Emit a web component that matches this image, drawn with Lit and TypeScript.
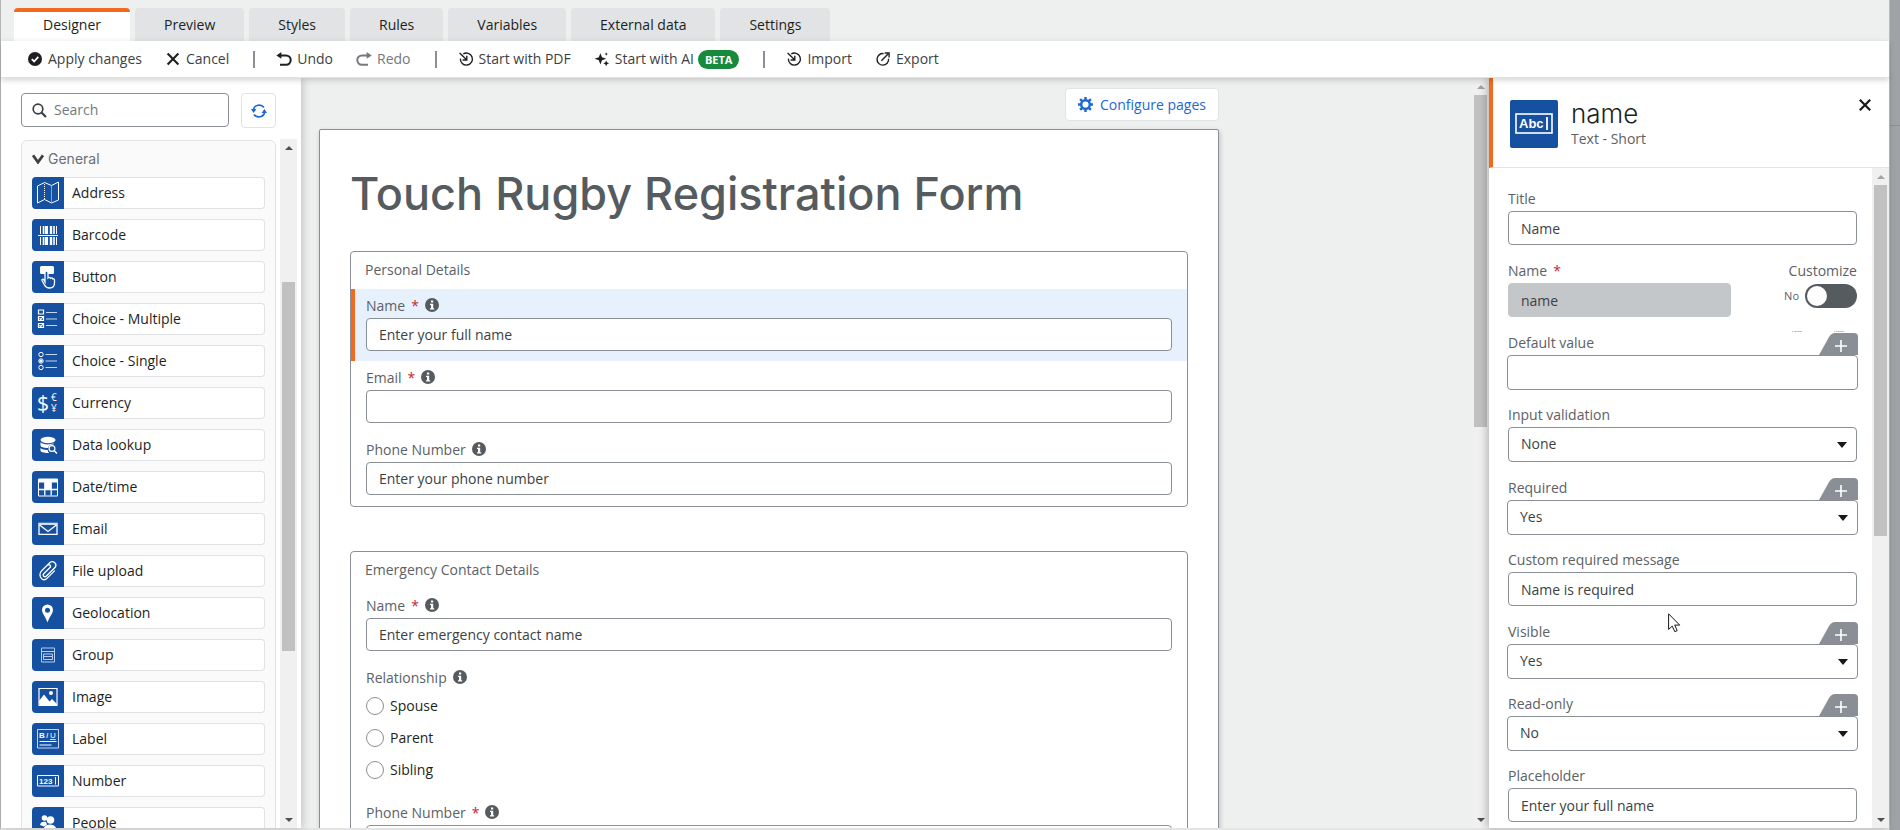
import { LitElement, html, css, svg, nothing } from "lit";
import { customElement, property } from "lit/decorators.js";
import { classMap } from "lit/directives/class-map.js";

const UI_FONT = css`"Open Sans", "Noto Sans", sans-serif`;

const tabs = ["Designer", "Preview", "Styles", "Rules", "Variables", "External data", "Settings"];

const importGlyph = svg`<path d="M4.200 2A6 6 0 1 1 1.400 6.600" fill="none" stroke="currentColor" stroke-width="1.400"/><path d="M.6 1l6.800 6.600M7.800 3.800v4.200H3.600" fill="none" stroke="currentColor" stroke-width="1.400"/>`;

const toolGlyphs: Record<string, unknown> = {
  apply: svg`<circle cx="7" cy="7" r="7" fill="currentColor"/><path d="M3.800 7.200l2.300 2.300 4.200-4.700" fill="none" stroke="#fff" stroke-width="1.800"/>`,
  cancel: svg`<path d="M1.600 1.600l10.800 10.800M12.400 1.600L1.600 12.400" stroke="currentColor" stroke-width="2.100"/>`,
  undo: svg`<path d="M1.500 3.400H9a4.600 4.600 0 0 1 0 9.400H3" fill="none" stroke="currentColor" stroke-width="2"/><path d="M-.6 3.400L4.400 0v6.800z" fill="currentColor"/>`,
  redo: svg`<path d="M12.500 3.400H5a4.600 4.600 0 0 0 0 9.400h6" fill="none" stroke="currentColor" stroke-width="2"/><path d="M14.800 3.400L9.600 0v6.800z" fill="currentColor"/>`,
  import: importGlyph,
  ai: svg`<path d="M5.400 1.200L7 5.300l4.200 1.500L7 8.300l-1.600 4.200-1.600-4.200L-.4 6.800l4.200-1.500zM11.200 8.400l.9 2 2 .9-2 .9-.9 2-.9-2-2-.9 2-.9zM11.200.2l.5 1.300 1.300.5-1.300.5-.5 1.300-.5-1.300L9.400 2l1.300-.5z" fill="currentColor"/>`,
  export: svg`<path d="M7.600 1.600A5.800 5.800 0 1 0 12.600 6.800M5.400 8.800L12 2M8.600 1h4.500v4.600" fill="none" stroke="currentColor" stroke-width="1.400"/>`,
};

const widgetGlyphs: Record<string, unknown> = {
  Address: svg`<path d="M5.500 9l7-3.500 7 3 7-3.500v18l-7 3-7-3.500-7 3.500z" fill="none" stroke="#fff"/><path d="M12.500 7v15M19.500 9.500v15" stroke="#fff" stroke-dasharray="1 1"/>`,
  Barcode: svg`<path d="M8.500 7v8M8.500 18v8M24.500 7v8M24.500 18v8M15.500 7v8M15.500 18v8" stroke="#fff"/><path d="M11.500 7v8M11.500 18v8M22 7v8M22 18v8" stroke="#fff" stroke-width="1.600"/><path d="M14 7v8M14 18v8M19 7v8M19 18v8" stroke="#fff" stroke-width="2.400"/><path d="M6 16.500h20" stroke="#fff"/>`,
  Button: svg`<rect x="8" y="5" width="14" height="8" rx="1.500" fill="#fff"/><path d="M13 21V11.500a1.500 1.500 0 0 1 3 0V17c1-1 2-.8 2.500.3.900-.7 2-.4 2.300.7 1-.4 1.700.1 1.700 1.200V22c0 3-2 5-5 5-3 0-4-1-5-3l-2.500-4.500c-.4-1 .8-1.700 1.600-1z" fill="#1650a1" stroke="#fff" stroke-width="1.300"/>`,
  "Choice - Multiple": svg`<path d="M6.500 7h5v4h-5zM6.500 13.500h5v4h-5zM6.500 20.500h5v4h-5z" fill="none" stroke="#fff" stroke-width="1.200"/><path d="M7.500 15.300l1.300 1.200 2-2.500M7.500 22.300l1.300 1.200 2-2.500" fill="none" stroke="#fff" stroke-width="1.200"/><path d="M14 9.500h11M14 16h11M14 22.500h11" stroke="#c6d6ec"/>`,
  "Choice - Single": svg`<g fill="none" stroke="#fff"><circle cx="9" cy="9.500" r="2.200"/><circle cx="9" cy="16" r="2.200"/><circle cx="9" cy="22.500" r="2.200"/></g><circle cx="9" cy="16" r="1.600" fill="#fff"/><path d="M13.500 9.500H25M13.500 16H25M13.500 22.500H25" stroke="#c6d6ec"/>`,
  Currency: svg`<g fill="#fff" font-family="Open Sans, sans-serif"><text x="5" y="24" font-size="21">$</text><text x="19" y="14" font-size="10">€</text><text x="19" y="25" font-size="10">¥</text></g>`,
  "Data lookup": svg`<ellipse cx="16" cy="11" rx="7.500" ry="3.200" fill="#fff"/><path d="M8.500 13.300c2.500 2.500 9 2.800 13 1v1.200a5 5 0 0 0-5.500 3.500c-4 .2-7-.8-7.500-2.200zM8.500 19c1.500 1.500 4.500 2 7.200 1.900a5 5 0 0 0 1.500 3c-4 .4-8.700-.8-8.700-2.400z" fill="#fff"/><circle cx="20" cy="19.500" r="2.900" fill="none" stroke="#fff" stroke-width="1.200"/><path d="M22 21.500l3 3" stroke="#fff" stroke-width="1.500"/>`,
  "Date/time": svg`<path d="M6.500 8h19v17h-19z" fill="none" stroke="#fff"/><path d="M6.500 8h19v3.500h-19z" fill="#fff"/><path d="M12.800 11v13.500M19.200 11v13.500M6.500 18.500h19" stroke="#fff" stroke-width="1.300"/><path d="M13 11h6v3h-6zM13 14h6v4h-6z" fill="#fff"/>`,
  Email: svg`<path d="M7 10.500h18v10.800H7z" fill="none" stroke="#fff" stroke-width="1.300"/><path d="M7 11.500l9 7 9-7" fill="none" stroke="#fff" stroke-width="1.300"/><path d="M7 10h18v2H7z" fill="#d3def0"/>`,
  "File upload": svg`<path d="M18.500 12l-6.800 6.800a1.700 1.700 0 0 0 2.500 2.500l9-9a3.600 3.600 0 0 0-5-5L9.700 15.700a5.400 5.400 0 0 0 0 8 4 4 0 0 0 5.300-.3l7.500-7.500M18.500 12a1.700 1.700 0 0 0-2.500-2" fill="none" stroke="#fff" stroke-width="1.300" stroke-linecap="round"/>`,
  Geolocation: svg`<path d="M15.500 7.500a5.500 5.500 0 0 0-5.500 5.500c0 3.500 3.500 6.500 5.500 12.500 2-6 5.500-9 5.500-12.500a5.500 5.500 0 0 0-5.500-5.500zm0 3.300a2.500 2.500 0 1 1 0 5 2.500 2.500 0 0 1 0-5z" fill="#fff" fill-rule="evenodd"/>`,
  Group: svg`<path d="M9.500 9h13v14h-13zM9.500 12.500h13M11.500 15h9M11.500 17.500h9v-2.500M11.500 20.500h9v-3M11.500 15v5.500" fill="none" stroke="#b9cde9"/>`,
  Image: svg`<path d="M7 7.500h18v17H7z" fill="none" stroke="#fff" stroke-width="1.200"/><circle cx="19" cy="12" r="2" fill="#fff"/><path d="M7.500 24l-.5-4 5-6.500 5.500 7 2.500-2.500 5 5v1.500z" fill="#fff"/>`,
  Label: svg`<path d="M5.500 6.500h21v18.500h-21z" fill="none" stroke="#c6d6ec"/><g fill="#fff" font-family="Liberation Sans, sans-serif" font-size="8"><text x="7" y="15" font-weight="700">B</text><text x="14" y="15" font-style="italic">I</text><text x="18" y="15" text-decoration="underline">U</text></g><path d="M7.500 18.500h17M7.500 22h12" stroke="#fff" stroke-width="1.200"/>`,
  Number: svg`<path d="M5.500 10.500h21v10.500h-21z" fill="none" stroke="#fff"/><text x="7" y="19" fill="#fff" font-family="Liberation Sans, sans-serif" font-size="8" font-weight="700">123</text><path d="M23.500 12v7.500" stroke="#fff"/>`,
  People: svg`<circle cx="12.500" cy="11" r="2.800" fill="#fff"/><circle cx="18.500" cy="13" r="3.800" fill="#fff"/><path d="M8 18c.5-3 3-4 6-3l1 2.500-3 2zM11 25c0-5 3-7.500 7-7.500s7 2.500 7 7.500v3H11z" fill="#fff"/>`,
};

@customElement("scroll-track")
class ScrollTrack extends LitElement {
  @property({ type: Number }) start = 0;
  @property({ type: Number }) size = 50;
  @property({ type: Boolean }) top = false;

  static styles = css`
    :host { display: flex; flex: none; width: 17px; flex-direction: column; align-items: center; background: #f0f0f0; }
    .arrow { flex: none; height: 17px; display: flex; align-items: center; }
    .arrow svg { display: block; }
    .rail { flex: 1; width: 13px; position: relative; }
    .thumb { position: absolute; left: 0; right: 0; background: #c1c1c1; }
  `;

  render() {
    return html`
      <div class="arrow"><svg width="8" height="4"><path d="M0 4L4 0l4 4z" fill=${this.top ? "#a3a3a3" : "#505050"} /></svg></div>
      <div class="rail"><div class="thumb" style="top:${this.start}%;height:${this.size}%"></div></div>
      <div class="arrow"><svg width="8" height="4"><path d="M0 0h8L4 4z" fill="#505050" /></svg></div>
    `;
  }
}

interface PropField {
  id: string;
  label: string;
  value: string;
  kind: "text" | "select";
  expr?: boolean;
}

const propFields: PropField[] = [
  { id: "default", label: "Default value", value: "", kind: "text", expr: true },
  { id: "validation", label: "Input validation", value: "None", kind: "select" },
  { id: "required", label: "Required", value: "Yes", kind: "select", expr: true },
  { id: "message", label: "Custom required message", value: "Name is required", kind: "text" },
  { id: "visible", label: "Visible", value: "Yes", kind: "select", expr: true },
  { id: "readonly", label: "Read-only", value: "No", kind: "select", expr: true },
  { id: "placeholder", label: "Placeholder", value: "Enter your full name", kind: "text" },
];

@customElement("app-root")
class AppRoot extends LitElement {
  static styles = css`
    :host { display: block; height: 100vh; overflow: hidden; font: 14px/20px ${UI_FONT}; color: #1d1f22; }
    * { box-sizing: border-box; }
    button, input, select { font: inherit; color: inherit; margin: 0; }
    button { cursor: pointer; }
    svg { display: block; flex: none; }
    h1, h2, h3, p { margin: 0; font-weight: 400; }

    .shell { display: flex; height: 100%; background: #9fa3a7; }
    .window { flex: 1; min-width: 0; display: flex; flex-direction: column; border-left: 1px solid #b4b4b4; border-bottom: 2px solid #e4e4e4; background: #eef0f0; }
    .behind { flex: none; width: 11px; border-left: 1px solid #b9bcbe; }
    .behind-top { height: 126px; border-bottom: 1px solid #8d9195; }

    .tabs { flex: none; display: flex; gap: 5px; height: 41px; padding: 8px 13px 0; }
    .tab { border: 0; border-radius: 4px 4px 0 0; background: #e1e3e4; padding: 0 29px; }
    .tab.active { background: #fff; border-top: 4px solid #f26a1b; padding-bottom: 4px; }

    .toolbar { flex: none; display: flex; align-items: center; gap: 24px; height: 37px; padding: 0 27px; background: #fff; border-bottom: 1px solid #e0e2e3; box-shadow: 0 2px 6px rgba(0, 0, 0, 0.18); position: relative; z-index: 2; }
    .tool { display: flex; align-items: center; gap: 6px; border: 0; background: none; padding: 0; color: #3c3f43; white-space: nowrap; }
    .tool svg { color: #1d1f22; overflow: visible; }
    .tool.muted, .tool.muted svg { color: #74797e; }
    .tool-text { display: flex; align-items: center; gap: 4px; }
    .beta { background: #178a3c; color: #fff; font-size: 11px; line-height: 19px; font-weight: 700; border-radius: 10px; padding: 0 7px; }
    .sep { width: 2px; height: 17px; margin: 0 -1px 0 0; background: #8a8f96; }
    .sep + .tool { margin-left: -1px; }

    .body { flex: 1; min-height: 0; display: flex; }

    .palette { flex: none; width: 300px; display: flex; flex-direction: column; background: #fff; box-shadow: 2px 0 8px rgba(0, 0, 0, 0.18); z-index: 1; }
    .search-row { flex: none; display: flex; gap: 12px; padding: 15px 25px 11px 20px; }
    .search { flex: 1; min-width: 0; display: flex; align-items: center; gap: 7px; height: 34px; border: 1px solid #8a8f96; border-radius: 4px; padding: 0 10px; }
    .search input { flex: 1; min-width: 0; border: 0; outline: 0; padding: 0; background: none; }
    .search input::placeholder { color: #74797e; opacity: 1; }
    .refresh { width: 35px; height: 35px; border: 1px solid #e1e2e5; border-radius: 4px; background: #fff; display: flex; align-items: center; justify-content: center; padding: 0; }
    .palette-scroll { flex: 1; min-height: 0; display: flex; gap: 4px; padding: 0 4px 0 20px; }
    .palette-clip { flex: 1; min-width: 0; overflow: hidden; padding-top: 1px; }
    .group { border: 1px solid #e1e2e5; border-radius: 6px; background: #fafafa; padding: 8px 10px; }
    .group-title { display: flex; align-items: center; gap: 4px; font: 14px/20px Inter, "Open Sans", sans-serif; color: #6a6f74; padding-bottom: 8px; }
    .widgets { display: grid; gap: 10px; }
    .widget { display: flex; align-items: center; gap: 8px; height: 32px; border: 1px solid #e1e2e5; border-left: 0; border-radius: 4px; background: #fff; padding: 0; text-align: left; }
    .widget svg { border-radius: 4px 0 0 4px; background: #1650a1; }

    .canvas { flex: 1; min-width: 0; display: flex; overflow: hidden; }
    .canvas-inner { flex: 1; min-width: 0; padding: 10px 18px 0; }
    .page-wrap { width: 900px; max-width: 100%; }
    .configure-row { display: flex; justify-content: flex-end; padding-bottom: 8px; }
    .configure { display: flex; align-items: center; gap: 7px; height: 33px; border: 1px solid #e1e2e5; border-radius: 4px; background: #fff; color: #1e68d2; padding: 0 12px; }
    .page { background: #fff; border: 1px solid #8a8f96; border-radius: 2px; padding: 37px 30px; box-shadow: 1px 2px 5px rgba(0, 0, 0, 0.2); }
    .page h1 { font: 500 45px/54px Inter, "Open Sans", sans-serif; color: #565b60; padding-bottom: 30px; white-space: nowrap; }
    .section { border: 1px solid #8a8f96; border-radius: 4px; margin-bottom: 44px; }
    .section h2 { font-size: 14px; line-height: 35px; color: #5c6166; padding: 0 14px 2px; }
    .row { padding: 4px 15px 10px; }
    .row.selected { background: #e7f1fe; border-left: 4px solid #f26a1b; padding-left: 11px; }
    .row:last-child { padding-bottom: 11px; }
    .caption { display: flex; align-items: center; gap: 6px; height: 25px; color: #5c6166; }
    .caption svg { margin-bottom: 2px; }
    .star { color: #c4262e; }
    .box { display: block; width: 100%; height: 33px; border: 1px solid #8a8f96; border-radius: 4px; background: #fff; padding: 0 12px; outline: 0; color: #3c3f43; }
    .box::placeholder { color: #3c3f43; opacity: 1; }
    .option { display: flex; align-items: center; gap: 6px; height: 32px; }
    .option input { appearance: none; width: 18px; height: 18px; border: 1px solid #8a8f96; border-radius: 50%; background: #fff; }

    .props { flex: none; width: 400px; display: flex; flex-direction: column; background: #fff; box-shadow: -2px 0 8px rgba(0, 0, 0, 0.25); z-index: 1; }
    .props-head { flex: none; display: flex; align-items: flex-start; gap: 13px; height: 90px; padding: 21px 18px 0 17px; border-left: 4px solid #f26a1b; border-bottom: 1px solid #e1e2e5; }
    .badge { border-radius: 2px; background: #1650a1; margin-top: 1px; }
    .heading { flex: 1; }
    .heading h2 { font: 300 26px/30px Inter, "Open Sans", sans-serif; }
    .heading p { color: #5c6166; }
    .close { border: 0; background: none; padding: 0; }
    .props-scroll { flex: 1; min-height: 0; display: flex; }
    .form { flex: 1; min-width: 0; overflow: hidden; padding: 19px 15px 0 19px; }
    .field { padding-bottom: 14px; }
    .head { display: flex; align-items: center; gap: 6px; height: 24px; color: #5c6166; }
    .field.expr { margin: 0 -1px; padding-bottom: 13px; }
    .field.expr .head { justify-content: space-between; padding-left: 1px; }
    .field .box { height: 34px; color: #3c3f43; }
    .field.expr .box, .field select.box { height: 35px; padding-bottom: 2px; }
    .box[disabled] { background: #c3c7ca; border-color: #c3c7ca; color: #3c3f43; opacity: 1; }
    select.box { appearance: none; background: #fff url("data:image/svg+xml,%3Csvg xmlns='http://www.w3.org/2000/svg' width='10' height='6'%3E%3Cpath d='M0 0h10L5 6z' fill='%2316181b'/%3E%3C/svg%3E") no-repeat right 9px center; }
    .plus { align-self: flex-end; border: 0; padding: 0; background: none; color: #8a8f96; height: 22px; }
    .pair { display: flex; justify-content: space-between; padding-bottom: 14px; position: relative; }
    .pair .field { padding: 0; width: 223px; }
    .specks { position: absolute; right: 13px; bottom: -1px; }
    .custom { color: #5c6166; text-align: right; }
    .custom .head { justify-content: flex-end; }
    .toggle-line { display: flex; align-items: center; gap: 6px; font-size: 11px; padding-top: 1px; }
    .toggle { appearance: none; width: 52px; height: 24px; border-radius: 12px; background: #565b60; padding: 2px; display: flex; }
    .toggle::before { content: ""; width: 20px; height: 20px; border-radius: 50%; background: #fff; }
    .pointer { position: absolute; left: 1668px; top: 613px; z-index: 5; pointer-events: none; }
  `;

  private tool(icon: string, label: string, muted = false, beta = false) {
    return html`<button class=${classMap({ tool: true, muted })}>
      <svg width="14" height="14" viewBox="0 0 14 14">${toolGlyphs[icon]}</svg>
      <span class="tool-text">${label}${beta ? html`<span class="beta">BETA</span>` : nothing}</span>
    </button>`;
  }

  private info() {
    return html`<svg width="14" height="14" viewBox="0 0 14 14"><circle cx="7" cy="7" r="7" fill="#565b60" /><path d="M6 2.500h2.200v2H6zM5 5.800h3.200v4.500h1v1.200H5v-1.200h1V7H5z" fill="#fff" /></svg>`;
  }

  private row(id: string, label: string, required: boolean, placeholder = "", selected = false) {
    return html`<div class=${classMap({ row: true, selected })}>
      <label class="caption" for=${id}>${label} ${required ? html`<span class="star">*</span>` : nothing}${this.info()}</label>
      <input class="box" id=${id} placeholder=${placeholder} />
    </div>`;
  }

  private prop(f: PropField) {
    return html`<div class=${classMap({ field: true, expr: !!f.expr })}>
      <div class="head">
        <label for=${f.id}>${f.label}</label>
        ${f.expr
          ? html`<button class="plus" aria-label="Add expression">
              <svg width="39" height="22"><path d="M0 22L10 4q2.500-4 6-4h19q4 0 4 4v18z" fill="currentColor" /><path d="M22 7v12M16 13h12" stroke="#fff" stroke-width="1.600" /></svg>
            </button>`
          : nothing}
      </div>
      ${f.kind === "select"
        ? html`<select class="box" id=${f.id}><option>${f.value}</option></select>`
        : html`<input class="box" id=${f.id} .value=${f.value} />`}
    </div>`;
  }

  render() {
    return html`
      <div class="shell">
        <div class="window">
          <nav class="tabs">
            ${tabs.map((t, i) => html`<button class=${classMap({ tab: true, active: i === 0 })}>${t}</button>`)}
          </nav>
          <div class="toolbar">
            ${this.tool("apply", "Apply changes")} ${this.tool("cancel", "Cancel")}
            <span class="sep"></span>
            ${this.tool("undo", "Undo")} ${this.tool("redo", "Redo", true)}
            <span class="sep"></span>
            ${this.tool("import", "Start with PDF")} ${this.tool("ai", "Start with AI", false, true)}
            <span class="sep"></span>
            ${this.tool("import", "Import")} ${this.tool("export", "Export")}
          </div>
          <div class="body">
            <aside class="palette">
              <div class="search-row">
                <label class="search">
                  <svg width="15" height="15" viewBox="0 0 15 15"><circle cx="6" cy="6" r="4.800" fill="none" stroke="#3c3f43" stroke-width="1.700" /><path d="M9.500 9.500l4.500 4.500" stroke="#3c3f43" stroke-width="2.200" /></svg>
                  <input type="search" placeholder="Search" aria-label="Search" />
                </label>
                <button class="refresh" aria-label="Refresh">
                  <svg width="16" height="16" viewBox="0 0 16 16"><path d="M2.300 6.800A6 6 0 0 1 13 4.600M13.700 9.200A6 6 0 0 1 3 11.400" fill="none" stroke="#1e68d2" stroke-width="1.700" /><path d="M0 6h5.400L2.600 10zM16 10h-5.400l2.800-4z" fill="#1e68d2" /></svg>
                </button>
              </div>
              <div class="palette-scroll">
                <div class="palette-clip">
                  <div class="group">
                    <h3 class="group-title"><svg width="12" height="10" viewBox="0 0 12 10"><path d="M1 1.200l5 7 5-7" fill="none" stroke="#3c3f43" stroke-width="2.800" /></svg>General</h3>
                    <div class="widgets">
                      ${Object.keys(widgetGlyphs).map(
                        (name) => html`<button class="widget"><svg width="32" height="32" viewBox="0 0 32 32">${widgetGlyphs[name]}</svg>${name}</button>`
                      )}
                    </div>
                  </div>
                </div>
                <scroll-track start="19.300" size="56.300"></scroll-track>
              </div>
            </aside>

            <main class="canvas">
              <div class="canvas-inner">
                <div class="page-wrap">
                  <div class="configure-row">
                    <button class="configure">
                      <svg width="15" height="15" viewBox="0 0 16 16"><circle cx="8" cy="8" r="4.600" fill="none" stroke="currentColor" stroke-width="2.600" /><path d="M8 0v3M8 13v3M0 8h3M13 8h3M2.300 2.300l2.200 2.200M11.500 11.500l2.200 2.200M2.300 13.700l2.200-2.200M11.500 4.500l2.200-2.200" stroke="currentColor" stroke-width="2.600" /></svg>
                      Configure pages
                    </button>
                  </div>
                  <div class="page">
                    <h1>Touch Rugby Registration Form</h1>
                    <section class="section">
                      <h2>Personal Details</h2>
                      ${this.row("p-name", "Name", true, "Enter your full name", true)}
                      ${this.row("p-email", "Email", true)}
                      ${this.row("p-phone", "Phone Number", false, "Enter your phone number")}
                    </section>
                    <section class="section">
                      <h2>Emergency Contact Details</h2>
                      ${this.row("e-name", "Name", true, "Enter emergency contact name")}
                      <div class="row" role="radiogroup" aria-labelledby="rel">
                        <div class="caption" id="rel">Relationship ${this.info()}</div>
                        ${["Spouse", "Parent", "Sibling"].map(
                          (o) => html`<label class="option"><input type="radio" name="relationship" />${o}</label>`
                        )}
                      </div>
                      ${this.row("e-phone", "Phone Number", true)}
                    </section>
                  </div>
                </div>
              </div>
              <scroll-track start="0" size="46.300" top></scroll-track>
            </main>

            <aside class="props">
              <header class="props-head">
                <svg class="badge" width="48" height="48" viewBox="0 0 48 48"><rect x="6" y="14" width="36" height="19" fill="none" stroke="#fff" stroke-width="1.600" /><text x="9" y="28" fill="#fff" font-family="Liberation Sans, sans-serif" font-size="13" font-weight="700">Abc</text><path d="M37 17v13" stroke="#fff" stroke-width="1.800" /></svg>
                <div class="heading">
                  <h2>name</h2>
                  <p>Text - Short</p>
                </div>
                <button class="close" aria-label="Close"><svg width="12" height="12" viewBox="0 0 12 12"><path d="M.8.800l10.400 10.400M11.200.800L.8 11.200" stroke="#16181b" stroke-width="2.200" /></svg></button>
              </header>
              <div class="props-scroll">
                <div class="form">
                  <div class="field">
                    <div class="head"><label for="title">Title</label></div>
                    <input class="box" id="title" .value=${"Name"} />
                  </div>
                  <div class="pair">
                    <div class="field">
                      <div class="head"><label for="key">Name</label><span class="star">*</span></div>
                      <input class="box" id="key" disabled .value=${"name"} />
                    </div>
                    <div class="custom">
                      <div class="head"><label for="customize">Customize</label></div>
                      <div class="toggle-line">No<input class="toggle" id="customize" type="checkbox" role="switch" /></div>
                    </div>
                    <svg class="specks" width="52" height="1"><path d="M0 .5h1M2 .5h8M42 .5h1M44 .5h8" stroke="#a9c8e6" /></svg>
                  </div>
                  ${propFields.map((f) => this.prop(f))}
                </div>
                <scroll-track start="0" size="56" top></scroll-track>
              </div>
            </aside>
          </div>
        </div>
        <div class="behind"><div class="behind-top"></div></div>
      </div>
      <svg class="pointer" width="13" height="20" viewBox="0 0 13 20"><path d="M.6.800v15.600l3.600-3.300 2.600 5.600 2.400-1.100-2.500-5.500h5z" fill="#fff" stroke="#16181b" /></svg>
    `;
  }
}
